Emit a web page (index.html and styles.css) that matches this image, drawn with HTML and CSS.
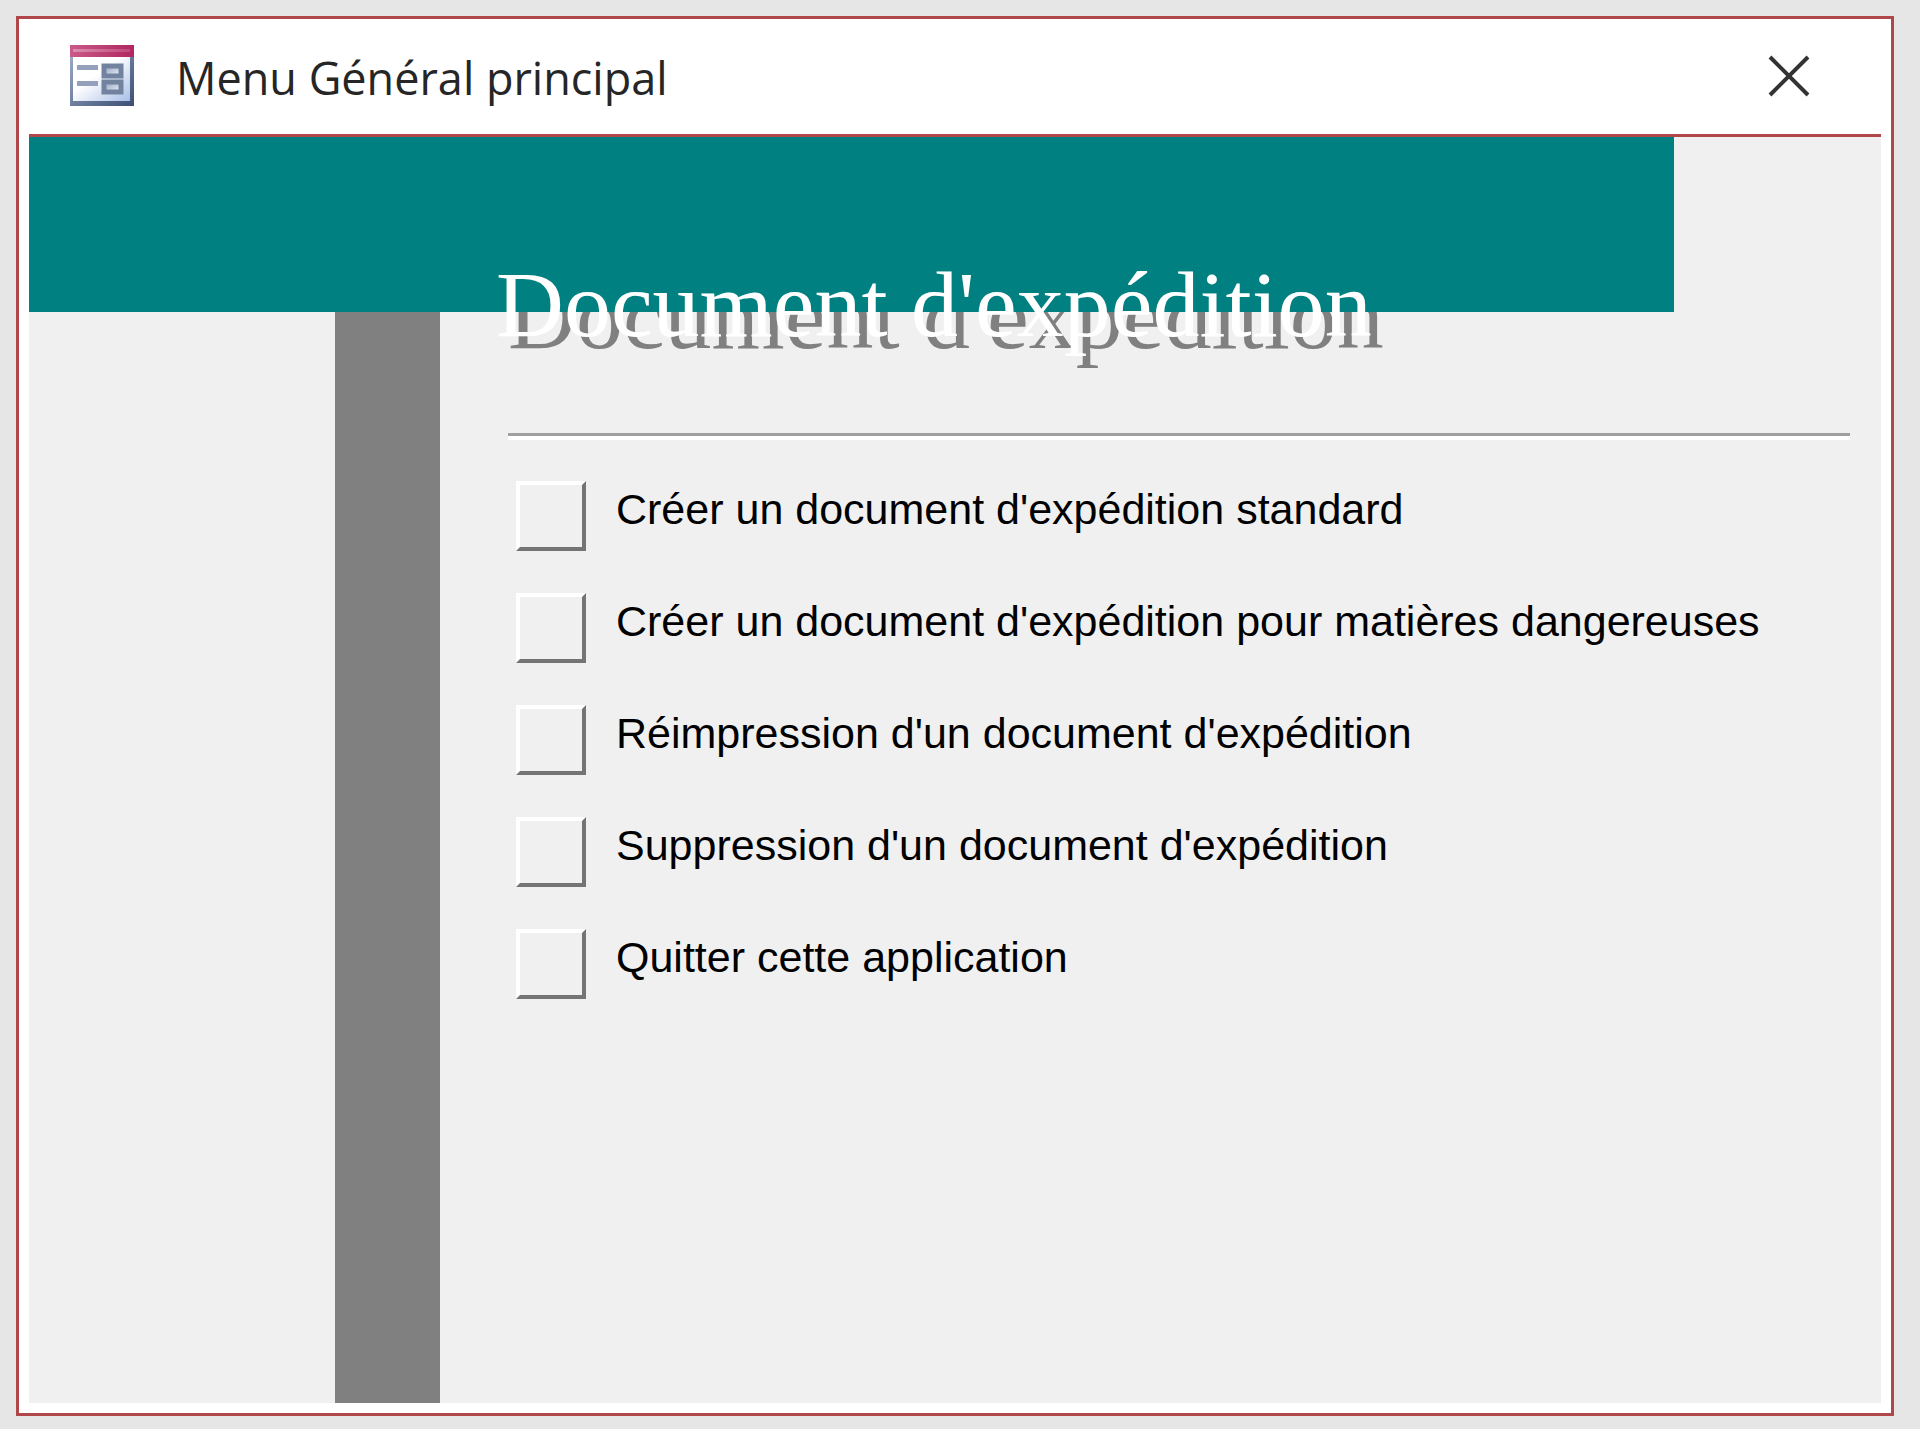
FILE: index.html
```html
<!DOCTYPE html>
<html lang="fr">
<head>
<meta charset="utf-8">
<meta name="viewport" content="width=device-width, initial-scale=1">
<title>Menu Général principal</title>
<link rel="stylesheet" href="styles.css">
</head>
<body>
<div class="window">
  <header class="titlebar">
    <svg class="form-icon" viewBox="0 0 64 61" aria-hidden="true">
      <defs>
        <linearGradient id="paper" x1="0" y1="0" x2="1" y2="1">
          <stop offset="0.4" stop-color="#ffffff"/>
          <stop offset="1" stop-color="#a9bfe8"/>
        </linearGradient>
        <linearGradient id="edge" x1="0" y1="0" x2="1" y2="1">
          <stop offset="0" stop-color="#a3b2cc"/>
          <stop offset="1" stop-color="#3c4f73"/>
        </linearGradient>
        <linearGradient id="band" x1="0" y1="0" x2="1" y2="0">
          <stop offset="0" stop-color="#c95a88"/>
          <stop offset="1" stop-color="#b02860"/>
        </linearGradient>
        <linearGradient id="shine" x1="0" y1="0" x2="1" y2="0">
          <stop offset="0" stop-color="#dc8fb0"/>
          <stop offset="1" stop-color="#c04a7c"/>
        </linearGradient>
        <linearGradient id="field" x1="0" y1="0" x2="1" y2="1">
          <stop offset="0" stop-color="#8e9fbe"/>
          <stop offset="1" stop-color="#f2f5fb"/>
        </linearGradient>
      </defs>
      <rect width="64" height="61" fill="url(#edge)"/>
      <rect x="3" y="12" width="57" height="44" fill="url(#paper)"/>
      <rect width="64" height="12" fill="url(#band)"/>
      <rect x="3" y="4" width="57" height="3" fill="url(#shine)"/>
      <rect x="7" y="20" width="21" height="5" fill="#94a0bc"/>
      <rect x="7" y="36" width="21" height="5" fill="#94a0bc"/>
      <rect x="34" y="21" width="17" height="10" fill="url(#field)" stroke="#71839f" stroke-width="5"/>
      <rect x="34" y="37" width="17" height="10" fill="url(#field)" stroke="#71839f" stroke-width="5"/>
    </svg>
    <h1 class="title">Menu Général principal</h1>
    <button class="close" type="button" aria-label="Fermer">
      <svg viewBox="0 0 42 42" aria-hidden="true"><path d="M2 2 40 40M40 2 2 40"/></svg>
    </button>
  </header>
  <main class="panel">
    <div class="banner"></div>
    <div class="sidebar"></div>
    <section class="content">
      <h2 class="heading" data-text="Document d'expédition">Document d'expédition</h2>
      <hr class="rule">
      <ul class="menu">
        <li class="item"><button class="key" type="button" id="standard"></button><label for="standard">Créer un document d'expédition standard</label></li>
        <li class="item"><button class="key" type="button" id="danger"></button><label for="danger">Créer un document d'expédition pour matières dangereuses</label></li>
        <li class="item"><button class="key" type="button" id="reprint"></button><label for="reprint">Réimpression d'un document d'expédition</label></li>
        <li class="item"><button class="key" type="button" id="delete"></button><label for="delete">Suppression d'un document d'expédition</label></li>
        <li class="item"><button class="key" type="button" id="quit"></button><label for="quit">Quitter cette application</label></li>
      </ul>
    </section>
  </main>
</div>
</body>
</html>
```
FILE: styles.css
```css
* {
  box-sizing: border-box;
}

body {
  display: flex;
  min-height: 100vh;
  margin: 0;
  padding: 16px 26px 13px 16px;
  background: #e6e6e6;
}

.window {
  flex: 1;
  display: flex;
  flex-direction: column;
  padding: 0 10px 10px;
  border: 3px solid #b0474b;
  background: #fff;
}

.titlebar {
  display: flex;
  align-items: center;
  height: 118px;
  padding: 0 71px 2px 41px;
  border-bottom: 3px solid #b0474b;
}

.form-icon {
  width: 64px;
  height: 61px;
}

.title {
  flex: 1;
  margin: 0 0 0 42px;
  padding-top: 4px;
  font: 400 45px/60px "Open Sans", "Noto Sans", sans-serif;
  color: #262626;
}

.close {
  width: 42px;
  height: 42px;
  padding: 0;
  border: 0;
  background: none;
}

.close svg {
  display: block;
  fill: none;
  stroke: #333;
  stroke-width: 4;
}

.panel {
  flex: 1;
  display: grid;
  grid-template-columns: 306px 105px 1fr;
  grid-template-rows: 175px 1fr;
  isolation: isolate;
  background: #f0f0f0;
}

.banner {
  grid-area: 1 / 1 / 2 / 4;
  margin-right: 207px;
  background: #008080;
}

.sidebar {
  grid-area: 2 / 2;
  background: #808080;
}

.content {
  grid-area: 1 / 3 / 3 / 4;
  padding: 111px 31px 0 56px;
}

.heading {
  position: relative;
  margin: 0;
  font: 400 94px/112px "Liberation Serif", "Times New Roman", serif;
  white-space: nowrap;
  color: #fff;
}

/* The drop shadow passes behind the banner. */
.heading::before {
  content: attr(data-text);
  position: absolute;
  z-index: -1;
  top: 12px;
  left: 12px;
  color: #808080;
}

.rule {
  height: 7px;
  margin: 73px 0 41px 12px;
  border: 0;
  border-top: 3px solid #a0a0a0;
  border-bottom: 4px solid #fff;
}

.menu {
  display: flex;
  flex-direction: column;
  gap: 42px;
  margin: 0;
  padding: 0 0 0 20px;
  list-style: none;
}

.item {
  display: flex;
  gap: 30px;
  font: 400 43px/56px "Liberation Sans", Arial, sans-serif;
  color: #000;
}

.key {
  flex: none;
  width: 70px;
  height: 70px;
  padding: 0;
  border: 4px solid;
  border-color: #fff #747474 #747474 #fff;
  background: #f0f0f0;
}
```
